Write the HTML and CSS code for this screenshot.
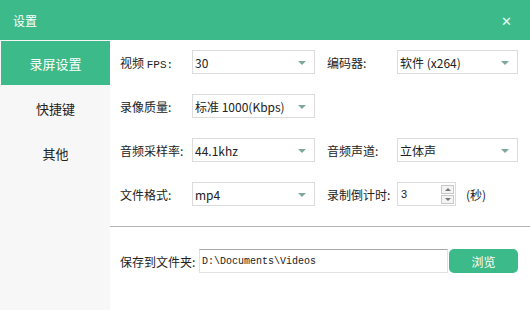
FILE: index.html
```html
<!DOCTYPE html>
<html lang="zh-CN">
<head>
  <meta charset="UTF-8">
  <title>设置</title>
  <link rel="stylesheet" href="styles.css">
</head>
<body>
  <div class="window">
    <div class="titlebar">
      <span class="title">设置</span>
      <span class="close">✕</span>
    </div>
    <div class="main">
      <div class="sidebar">
        <div class="nav-item active">录屏设置</div>
        <div class="nav-item">快捷键</div>
        <div class="nav-item">其他</div>
      </div>
      <div class="content">
        <div class="grid">
          <label class="label">视频 <span class="mono">FPS:</span></label>
          <div class="select">30<span class="arrow"></span></div>
          <label class="label second">编码器:</label>
          <div class="select">软件 (x264)<span class="arrow"></span></div>

          <label class="label">录像质量:</label>
          <div class="select">标准 1000(Kbps)<span class="arrow"></span></div>
          <div class="empty"></div>
          <div class="empty"></div>

          <label class="label">音频采样率:</label>
          <div class="select">44.1khz<span class="arrow"></span></div>
          <label class="label second">音频声道:</label>
          <div class="select">立体声<span class="arrow"></span></div>

          <label class="label">文件格式:</label>
          <div class="select">mp4<span class="arrow"></span></div>
          <label class="label second">录制倒计时:</label>
          <div class="spin-row">
            <div class="spin">
              <span class="spin-value">3</span>
              <span class="spin-btns">
                <span class="spin-btn up"></span>
                <span class="spin-btn down"></span>
              </span>
            </div>
            <span class="unit">(秒)</span>
          </div>
        </div>
        <div class="separator"></div>
        <div class="save-row">
          <label class="label save-label">保存到文件夹:</label>
          <div class="path">D:\Documents\Videos</div>
          <button class="browse">浏览</button>
        </div>
      </div>
    </div>
  </div>
</body>
</html>
```
FILE: styles.css
```css
body {
  margin: 0;
  font-family: "Noto Sans CJK SC", "Liberation Sans", sans-serif;
  font-size: 12px;
  color: #222;
  background: #fff;
}
.window {
  width: 530px;
  height: 310px;
  display: flex;
  flex-direction: column;
}
.titlebar {
  height: 40px;
  background: #3dba89;
  color: #fff;
  display: flex;
  align-items: center;
  justify-content: space-between;
  padding: 0 18px 0 13px;
}
.title { font-size: 12px; }
.close { font-size: 13px; color: #e8fff4; }
.main {
  flex: 1;
  display: flex;
}
.sidebar {
  width: 110px;
  background: #f7f7f7;
  padding-top: 1px;
}
.nav-item {
  height: 45px;
  display: flex;
  align-items: center;
  justify-content: center;
  font-size: 13px;
  color: #222;
  margin-left: 1px;
}
.nav-item.active {
  background: #3dba89;
  color: #fff;
  height: 44px;
  margin-bottom: 1px;
}
.content {
  flex: 1;
  padding-top: 10px;
}
.grid {
  display: grid;
  grid-template-columns: 72px 123px 82px 121px;
  grid-auto-rows: 24px;
  row-gap: 20px;
  padding-left: 10px;
  align-items: center;
}
.label {
  white-space: nowrap;
  color: #222;
}
.label.second { padding-left: 12px; }
.mono {
  font-family: "Liberation Mono", monospace;
  font-size: 11px;
}
.select {
  position: relative;
  height: 24px;
  box-sizing: border-box;
  border: 1px solid #dcdcdc;
  display: flex;
  align-items: center;
  padding-left: 2px;
  color: #222;
}
.arrow {
  position: absolute;
  right: 8px;
  top: 10px;
  border-left: 4px solid transparent;
  border-right: 4px solid transparent;
  border-top: 4px solid #7fa89b;
}
.spin-row {
  display: flex;
  align-items: center;
}
.spin {
  width: 59px;
  height: 24px;
  box-sizing: border-box;
  border: 1px solid #dcdcdc;
  display: flex;
  align-items: center;
  justify-content: space-between;
  padding: 0 1px 0 3px;
}
.spin-value { font-family: "Liberation Sans", sans-serif; font-size: 11px; }
.spin-btns {
  display: flex;
  flex-direction: column;
  gap: 1px;
}
.spin-btn {
  position: relative;
  width: 13px;
  height: 9px;
  border: 1px solid #c8c8c8;
  box-sizing: border-box;
  background: #f4f4f4;
}
.spin-btn::after {
  content: "";
  position: absolute;
  left: 3px;
  top: 2px;
  border-left: 3px solid transparent;
  border-right: 3px solid transparent;
}
.spin-btn.up::after { border-bottom: 3px solid #777; }
.spin-btn.down::after { border-top: 3px solid #777; }
.unit { margin-left: 10px; }
.separator {
  height: 1px;
  background: #b4b4b4;
  margin-top: 20px;
}
.save-row {
  display: flex;
  align-items: center;
  margin-top: 22px;
  padding-left: 10px;
}
.save-label { width: 79px; }
.path {
  width: 249px;
  height: 24px;
  box-sizing: border-box;
  border: 1px solid #e2e2e2;
  border-top-color: #a8a8a8;
  display: flex;
  align-items: center;
  padding-left: 2px;
  font-family: "Liberation Mono", monospace;
  font-size: 10px;
}
.browse {
  width: 69px;
  height: 24px;
  margin-left: 1px;
  border: none;
  border-radius: 5px;
  background: #3dba89;
  color: #fff;
  font-family: "Noto Sans CJK SC", sans-serif;
  font-size: 12px;
}
```
